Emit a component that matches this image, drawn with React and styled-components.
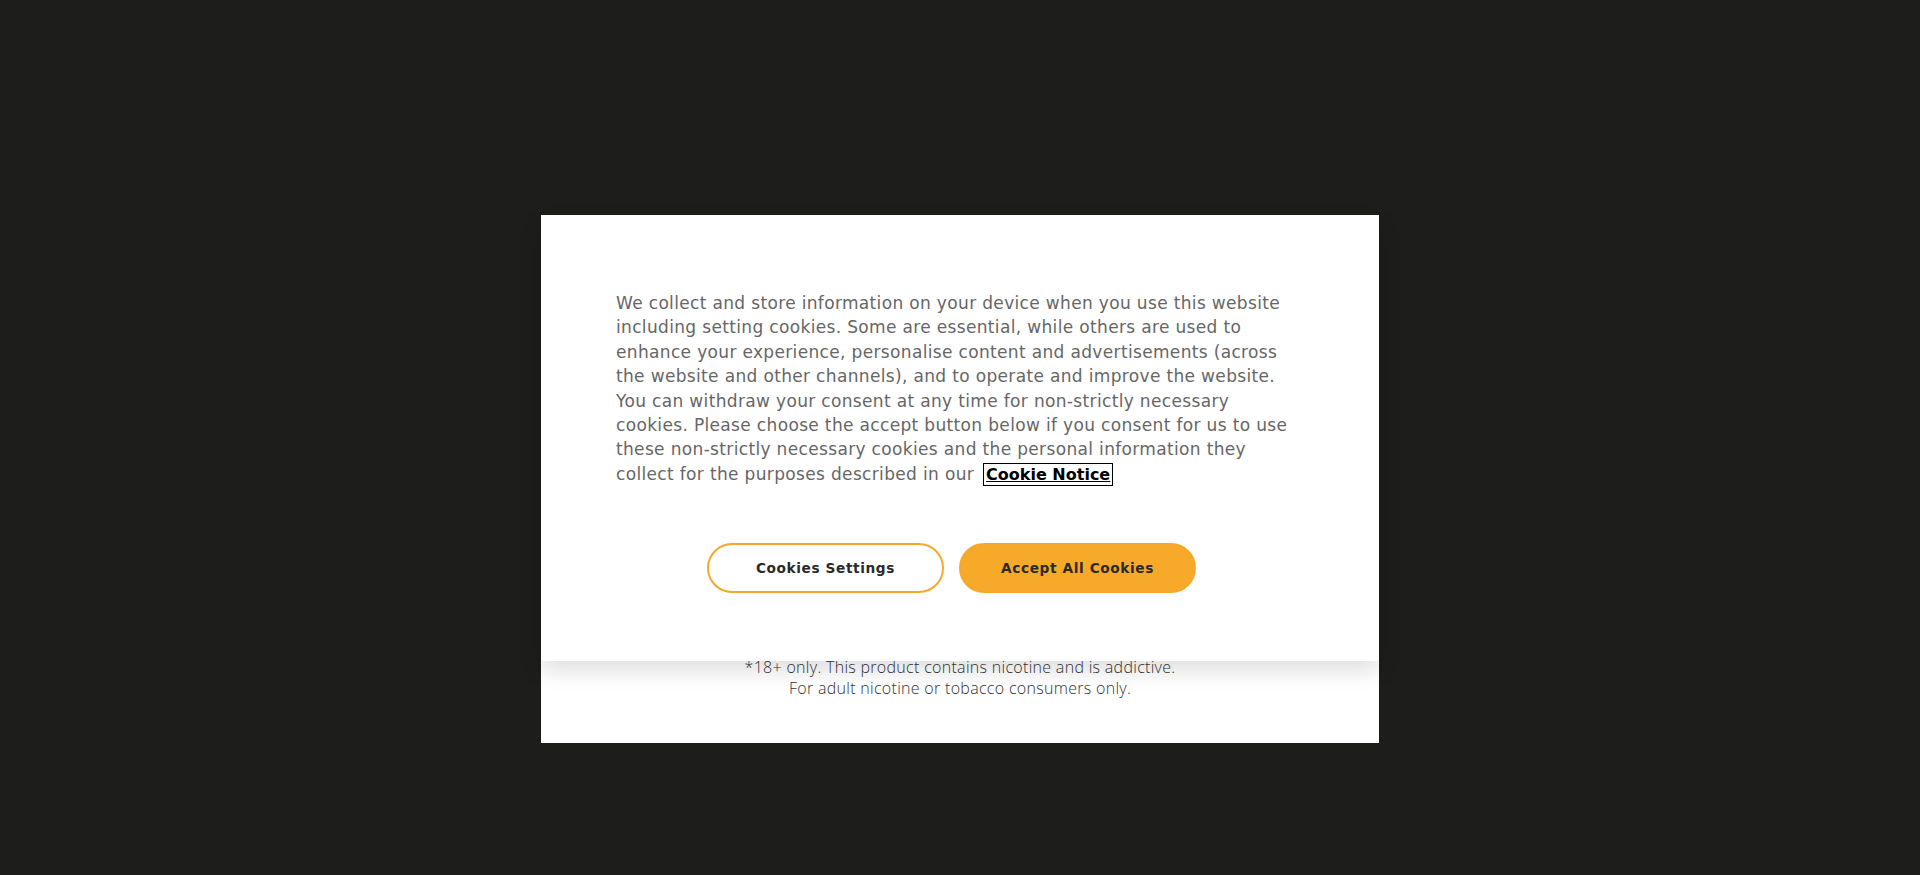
import styled, { createGlobalStyle } from "styled-components";

const GlobalStyle = createGlobalStyle`
  html, body {
    margin: 0;
    padding: 0;
    background: #1d1d1b;
  }
  body {
    font-family: "DejaVu Sans", "Liberation Sans", sans-serif;
  }
`;

const Page = styled.div`
  min-height: 875px;
  box-sizing: border-box;
  padding-top: 215px;
  display: flex;
  justify-content: center;
  align-items: flex-start;
`;

const AgeCard = styled.div`
  position: relative;
  width: 838px;
  height: 528px;
  background: #fff;
  display: flex;
  flex-direction: column;
  justify-content: flex-end;
  align-items: center;
  padding-bottom: 44px;
  box-sizing: border-box;
`;

const Disclaimer = styled.p`
  margin: 0;
  font-family: "Open Sans", Lato, sans-serif;
  font-weight: 300;
  font-size: 16px;
  line-height: 21px;
  color: #333;
  text-align: center;
  letter-spacing: 0.3px;
`;

const CookieModal = styled.div`
  position: absolute;
  top: 0;
  left: 0;
  right: 0;
  height: 446px;
  background: #fff;
  border-radius: 3px;
  box-shadow: 0 10px 22px rgba(0, 0, 0, 0.13);
  box-sizing: border-box;
  padding: 76px 60px 0 75px;
  display: flex;
  flex-direction: column;
`;

const Policy = styled.p`
  margin: 0;
  font-size: 17px;
  line-height: 24.4px;
  letter-spacing: 0.34px;
  color: #666;
  white-space: nowrap;
`;

const NoticeLink = styled.a`
  margin-left: 11px;
  padding: 0 1px;
  color: #000;
  font-size: 16px;
  font-weight: bold;
  letter-spacing: 0;
  text-decoration: underline;
  outline: 1px solid #000;
  outline-offset: 1px;
`;

const ButtonRow = styled.div`
  display: flex;
  justify-content: center;
  gap: 15px;
  margin-top: 56px;
  padding-right: 32px;
`;

const Button = styled.button`
  width: 237px;
  height: 50px;
  border-radius: 25px;
  border: 2px solid #f6a82a;
  background: ${(p) => (p.$filled ? "#f7a92a" : "#fff")};
  color: #2a2a2a;
  font-family: "DejaVu Sans", sans-serif;
  font-weight: bold;
  font-size: 13.7px;
  letter-spacing: 0.6px;
  cursor: pointer;
  box-sizing: border-box;
`;

const lines = [
  "We collect and store information on your device when you use this website",
  "including setting cookies. Some are essential, while others are used to",
  "enhance your experience, personalise content and advertisements (across",
  "the website and other channels), and to operate and improve the website.",
  "You can withdraw your consent at any time for non-strictly necessary",
  "cookies. Please choose the accept button below if you consent for us to use",
  "these non-strictly necessary cookies and the personal information they",
];

export default function App() {
  return (
    <>
      <GlobalStyle />
      <Page>
        <AgeCard>
          <Disclaimer>
            *18+ only. This product contains nicotine and is addictive.
            <br />
            For adult nicotine or tobacco consumers only.
          </Disclaimer>
          <CookieModal>
            <Policy>
              {lines.map((l) => (
                <span key={l}>
                  {l}
                  <br />
                </span>
              ))}
              collect for the purposes described in our
              <NoticeLink href="#">Cookie Notice</NoticeLink>
            </Policy>
            <ButtonRow>
              <Button>Cookies Settings</Button>
              <Button $filled>Accept All Cookies</Button>
            </ButtonRow>
          </CookieModal>
        </AgeCard>
      </Page>
    </>
  );
}
